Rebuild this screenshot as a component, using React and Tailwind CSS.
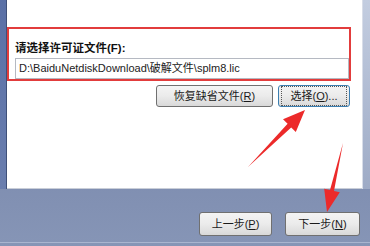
const font = { fontFamily: '"Liberation Sans", "Noto Sans CJK SC", sans-serif' };

const WinButton = ({ children, className = '', focused = false }) => (
  <div
    className={`flex items-center justify-center rounded-[3px] border bg-gradient-to-b from-[#f4f4f4] via-[#ebebeb] to-[#d9d9d9] text-[11px] text-[#1a1a1a] ${
      focused ? 'border-[#3c7fb1]' : 'border-[#707070]'
    } ${className}`}
  >
    {focused ? (
      <span className="flex h-full w-full items-center justify-center border border-dotted border-[#555] m-[2px]">
        {children}
      </span>
    ) : (
      children
    )}
  </div>
);

export default function App() {
  return (
    <div
      className="relative h-[246px] w-[370px] overflow-hidden bg-gradient-to-b from-[#6d7ea6] via-[#7a89ad] to-[#8695b6]"
      style={font}
    >
      {/* window body */}
      <div className="flex h-[189px]">
        <div className="w-[7px] bg-gradient-to-b from-[#5a70a6] to-[#6a7eae] border-r border-[#3f5078]" />
        <div className="flex-1 bg-white border-b border-[#c9ced8] pt-[27px]">
          <div className="mr-[11px] h-[54px] border-2 border-[#e23c3c] pl-[6px] pt-[12px]">
            <div className="text-[11.5px] font-bold leading-[14px] text-[#111]">请选择许可证文件(F):</div>
            <div className="mt-[3px] flex h-[21px] items-center border border-[#b5b9c2] pl-[3px] text-[11px] text-[#222]">
              D:\BaiduNetdiskDownload\破解文件\splm8.lic
            </div>
          </div>
          <div className="mt-[4px] flex justify-end gap-[5px] pr-[12px]">
            <WinButton className="h-[22px] w-[117px]">
              恢复缺省文件(<u>R</u>)
            </WinButton>
            <WinButton focused className="h-[22px] w-[72px]">
              选择(<u>O</u>)...
            </WinButton>
          </div>
        </div>
        <div className="w-[8px] bg-gradient-to-b from-[#c3cde0] to-[#9eabc6] border-l border-[#d8dde8]" />
      </div>

      {/* bottom bar */}
      <div className="flex justify-end gap-[13px] pr-[10px] pt-[23px]">
        <WinButton className="h-[24px] w-[73px]">
          上一步(<u>P</u>)
        </WinButton>
        <WinButton className="h-[24px] w-[75px]">
          下一步(<u>N</u>)
        </WinButton>
      </div>
      <div className="absolute bottom-[3px] left-0 h-px w-full bg-[#a9b5cf]" />

      {/* annotation arrows */}
      <svg className="absolute left-0 top-0" width="370" height="246" viewBox="0 0 370 246">
        <polygon
          fill="#ec2a2a"
          points="248,167 287.6,123.8 283,119.2 305,110 295.8,132 291.2,127.4"
        />
        <polygon
          fill="#ec2a2a"
          points="343,143 334,191 339.8,192.3 327,212 324.2,188.7 330,190"
        />
      </svg>
    </div>
  );
}
